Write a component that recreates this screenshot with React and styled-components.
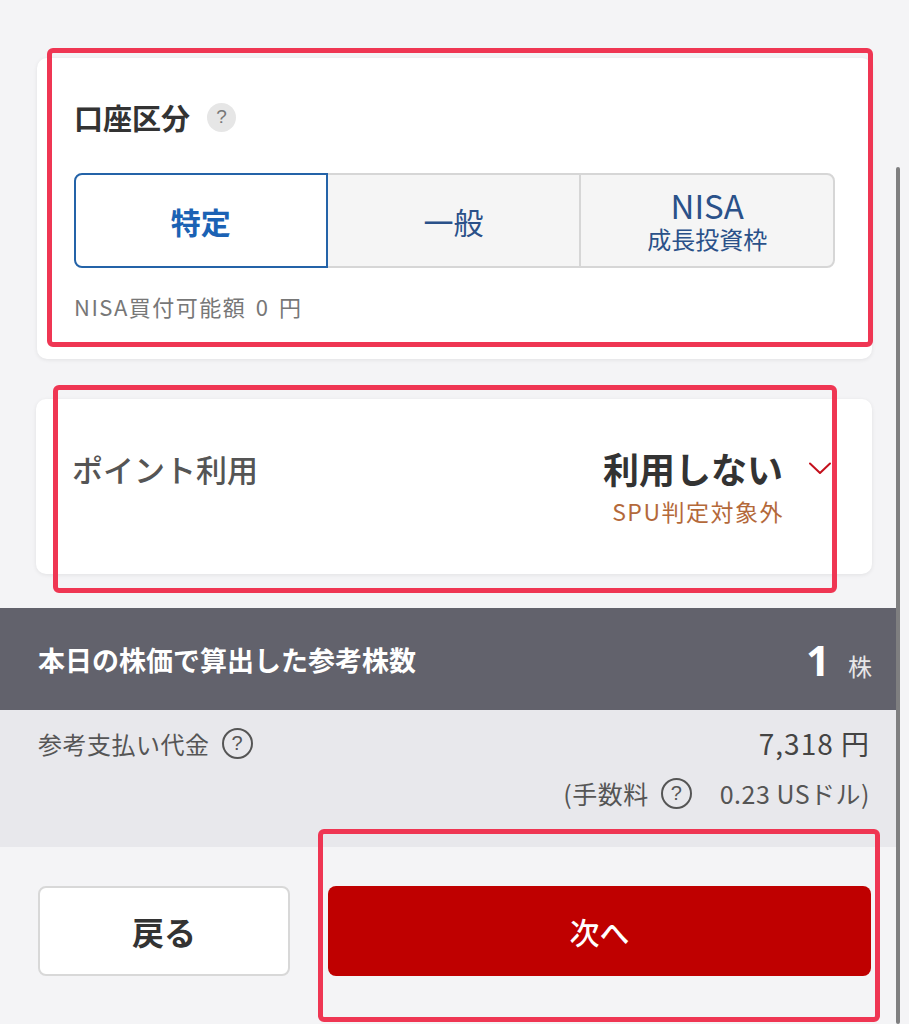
import React from 'react';
import styled, { createGlobalStyle } from 'styled-components';

const Global = createGlobalStyle`
  html, body { margin: 0; padding: 0; background: #f4f4f6; }
  body { font-family: "Noto Sans CJK JP", "Noto Sans", sans-serif; }
  * { box-sizing: border-box; }
`;

const Screen = styled.div`
  position: relative;
  width: 909px;
  height: 1024px;
  overflow: hidden;
  background: #f4f4f6;
`;

const Column = styled.main`
  width: 896px;
  display: flex;
  flex-direction: column;
  padding-top: 58px;
`;

const Cards = styled.div`
  display: flex;
  flex-direction: column;
  gap: 40px;
  padding: 0 24px 0 37px;
`;

const Card = styled.section`
  background: #fff;
  border-radius: 10px;
  box-shadow: 0 1px 4px rgba(0, 0, 0, 0.08);
`;

const AccountCard = styled(Card)`
  padding: 42px 37px 38px;
`;

const TitleRow = styled.div`
  display: flex;
  align-items: center;
  gap: 17px;
`;

const Title = styled.h2`
  margin: 0;
  font-size: 29px;
  line-height: 34px;
  font-weight: 700;
  color: #333;
`;

const HelpBadge = styled.span`
  width: 29px;
  height: 29px;
  border-radius: 50%;
  background: #e6e6e6;
  color: #777;
  font-size: 19px;
  display: inline-flex;
  align-items: center;
  justify-content: center;
  font-family: "Liberation Sans", sans-serif;
`;

const Segments = styled.div`
  margin-top: 39px;
  display: grid;
  grid-template-columns: repeat(3, 1fr);
  height: 95px;
`;

const Segment = styled.button`
  position: relative;
  z-index: ${p => (p.$active ? 1 : 0)};
  margin-left: ${p => (p.$first ? '0' : '-2px')};
  display: flex;
  flex-direction: column;
  align-items: center;
  justify-content: center;
  font-family: inherit;
  background: ${p => (p.$active ? '#fff' : '#f5f5f5')};
  border: 2px solid ${p => (p.$active ? '#2463a8' : '#d6d6d6')};
  border-radius: ${p => (p.$first ? '8px 0 0 8px' : p.$last ? '0 8px 8px 0' : '0')};
  color: ${p => (p.$active ? '#1b62b4' : '#2a5189')};
  padding: 0;
`;

const SegLabel = styled.span`
  font-size: ${p => p.$size || 30}px;
  font-weight: ${p => (p.$bold ? 700 : 400)};
  line-height: ${p => p.$lh || 36}px;
`;

const SegSub = styled.span`
  margin-top: 5px;
  font-size: 24px;
  line-height: 26px;
`;

const Note = styled.p`
  margin: 24px 0 0;
  font-size: 22px;
  line-height: 29px;
  letter-spacing: 1.5px;
  word-spacing: 3px;
  color: #777;
`;

const PointCard = styled(Card)`
  height: 175px;
  display: flex;
  align-items: center;
  padding: 0 43px 0 36px;
  margin-left: -1px;
`;

const PointRow = styled.div`
  width: 100%;
  display: flex;
  justify-content: space-between;
  align-items: flex-start;
`;

const PointLabel = styled.span`
  font-size: 31px;
  line-height: 43px;
  font-weight: 500;
  color: #555;
`;

const Choice = styled.div`
  display: grid;
  grid-template-columns: auto 20px;
  column-gap: 26px;
  align-items: center;
`;

const ChoiceValue = styled.span`
  font-size: 36px;
  line-height: 43px;
  font-weight: 700;
  color: #333;
  text-align: right;
`;

const ChoiceSub = styled.span`
  grid-column: 1;
  margin-top: 6px;
  margin-right: -1px;
  font-size: 23px;
  line-height: 30px;
  letter-spacing: 1.5px;
  color: #b4693a;
  text-align: right;
`;

const Band = styled.div`
  margin-top: 34px;
  height: 102px;
  background: #62626c;
  display: flex;
  align-items: center;
  justify-content: space-between;
  padding: 0 24px 0 38px;
`;

const BandTitle = styled.span`
  font-size: 27px;
  font-weight: 700;
  color: #fff;
`;

const Count = styled.span`
  display: flex;
  align-items: baseline;
  gap: 18px;
`;

const CountNum = styled.span`
  font-size: 42px;
  font-weight: 700;
  color: #fff;
  font-family: "Noto Sans", sans-serif;
`;

const CountUnit = styled.span`
  font-size: 24px;
  color: #e6e6e8;
`;

const Summary = styled.div`
  background: #e8e8ec;
  padding: 18px 26px 38px 38px;
`;

const SumRow = styled.div`
  display: flex;
  align-items: center;
  justify-content: ${p => (p.$end ? 'flex-end' : 'space-between')};
  margin-top: ${p => (p.$end ? '19px' : '0')};
  color: #555;
  font-size: ${p => (p.$end ? 25 : 24)}px;
  letter-spacing: 0.5px;
  line-height: 31px;
`;

const LabelGroup = styled.span`
  display: inline-flex;
  align-items: center;
  gap: ${p => p.$gap || 12}px;
`;

const HelpOutline = styled.span`
  width: 31px;
  height: 31px;
  border-radius: 50%;
  border: 2px solid #555;
  color: #555;
  font-size: 20px;
  letter-spacing: 0;
  display: inline-flex;
  align-items: center;
  justify-content: center;
  font-family: "Liberation Sans", sans-serif;
  margin-right: ${p => p.$after || 0}px;
`;

const Amount = styled.span`
  font-size: 28px;
  letter-spacing: 1px;
  color: #444;
`;

const Footer = styled.div`
  display: grid;
  grid-template-columns: 252px 1fr;
  gap: 38px;
  padding: 39px 25px 0 38px;
`;

const BackButton = styled.button`
  height: 90px;
  background: #fff;
  border: 2px solid #d8d8d8;
  border-radius: 8px;
  font-family: inherit;
  font-size: 32px;
  font-weight: 700;
  color: #333;
`;

const NextButton = styled.button`
  height: 90px;
  background: #bf0000;
  border: none;
  border-radius: 8px;
  font-family: inherit;
  font-size: 30px;
  font-weight: 500;
  color: #fff;
`;

const Scrollbar = styled.div`
  position: absolute;
  left: 896px;
  top: 167px;
  bottom: 0;
  width: 4px;
  border-radius: 2px;
  background: rgba(0, 0, 0, 0.48);
`;

const Highlight = styled.div`
  position: absolute;
  border: 5px solid #ef3653;
  border-radius: 6px;
  pointer-events: none;
`;

const Chevron = () => (
  <svg width="22" height="13" viewBox="0 0 22 13" fill="none">
    <path d="M1 1.5 L11 11 L21 1.5" stroke="#c4101c" strokeWidth="2" strokeLinecap="round" strokeLinejoin="round" />
  </svg>
);

export default function App() {
  return (
    <>
      <Global />
      <Screen>
        <Column>
          <Cards>
            <AccountCard>
              <TitleRow>
                <Title>口座区分</Title>
                <HelpBadge>?</HelpBadge>
              </TitleRow>
              <Segments>
                <Segment $active $first>
                  <SegLabel $bold>特定</SegLabel>
                </Segment>
                <Segment>
                  <SegLabel>一般</SegLabel>
                </Segment>
                <Segment $last>
                  <SegLabel $size={33} $lh={32}>NISA</SegLabel>
                  <SegSub>成長投資枠</SegSub>
                </Segment>
              </Segments>
              <Note>NISA買付可能額 0 円</Note>
            </AccountCard>
            <PointCard>
              <PointRow>
                <PointLabel>ポイント利用</PointLabel>
                <Choice>
                  <ChoiceValue>利用しない</ChoiceValue>
                  <Chevron />
                  <ChoiceSub>SPU判定対象外</ChoiceSub>
                </Choice>
              </PointRow>
            </PointCard>
          </Cards>
          <Band>
            <BandTitle>本日の株価で算出した参考株数</BandTitle>
            <Count>
              <CountNum>1</CountNum>
              <CountUnit>株</CountUnit>
            </Count>
          </Band>
          <Summary>
            <SumRow>
              <LabelGroup $gap={12}>
                参考支払い代金
                <HelpOutline>?</HelpOutline>
              </LabelGroup>
              <Amount>7,318 円</Amount>
            </SumRow>
            <SumRow $end>
              <LabelGroup $gap={12}>
                (手数料
                <HelpOutline $after={16}>?</HelpOutline>
                0.23 USドル)
              </LabelGroup>
            </SumRow>
          </Summary>
          <Footer>
            <BackButton>戻る</BackButton>
            <NextButton>次へ</NextButton>
          </Footer>
        </Column>
        <Scrollbar />
        <Highlight style={{ left: 47, top: 48, width: 826, height: 299 }} />
        <Highlight style={{ left: 53, top: 385, width: 784, height: 208 }} />
        <Highlight style={{ left: 318, top: 829, width: 562, height: 193 }} />
      </Screen>
    </>
  );
}
